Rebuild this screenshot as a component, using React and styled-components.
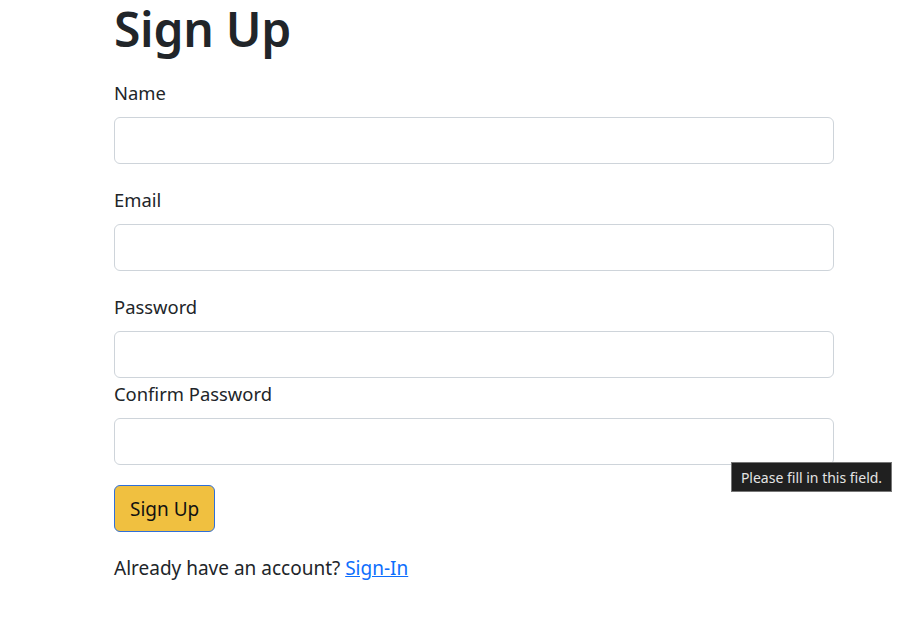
import React from 'react';
import styled, { createGlobalStyle } from 'styled-components';

const Global = createGlobalStyle`
  body {
    margin: 0;
    background: #fff;
    font-family: "Noto Sans", "Open Sans", sans-serif;
    color: #212529;
  }
`

const Page = styled.div`
  position: relative;
  width: 924px;
  height: 627px;
  overflow: hidden;
`
const Form = styled.form`
  width: 720px;
  margin-left: 114px;
  display: flex;
  flex-direction: column;
`
const Title = styled.h1`
  margin: 0;
  font-size: 48px;
  font-weight: 600;
  line-height: 58px;
  letter-spacing: -0.3px;
  color: #212529;
`
const Field = styled.div`
  display: flex;
  flex-direction: column;
  margin-top: ${p => p.gap}px;
`
const Label = styled.label`
  font-size: 18.4px;
  line-height: 27px;
  margin-bottom: 11px;
`
const Input = styled.input`
  box-sizing: border-box;
  height: 47px;
  width: 100%;
  border: 1px solid #ced4da;
  border-radius: 6px;
  background: #fff;
  font-size: 18px;
  padding: 0 14px;
  outline: none;
`
const Button = styled.button`
  align-self: flex-start;
  margin-top: 20px;
  height: 47px;
  padding: 0 15px;
  background: #f0c040;
  border: 1px solid #2f6fd9;
  border-radius: 6px;
  font-family: inherit;
  font-size: 19px;
  color: #111;
`
const Note = styled.p`
  margin: 22px 0 0;
  font-size: 19px;
  line-height: 28px;
`
const SignInLink = styled.a`
  color: #0d6efd;
  text-decoration: underline;
`
const Tooltip = styled.div`
  position: absolute;
  left: 731px;
  top: 462px;
  width: 161px;
  height: 30px;
  box-sizing: border-box;
  background: #202020;
  border: 1px solid #767676;
  color: #e4e4e4;
  font-size: 14px;
  display: flex;
  align-items: center;
  justify-content: center;
`

export default function App() {
  return (
    <Page>
      <Global />
      <Form onSubmit={e => e.preventDefault()}>
        <Title>Sign Up</Title>
        <Field gap={21}>
          <Label>Name</Label>
          <Input type="text" />
        </Field>
        <Field gap={22}>
          <Label>Email</Label>
          <Input type="email" />
        </Field>
        <Field gap={22}>
          <Label>Password</Label>
          <Input type="password" />
        </Field>
        <Field gap={2}>
          <Label>Confirm Password</Label>
          <Input type="password" />
        </Field>
        <Button type="submit">Sign Up</Button>
        <Note>
          Already have an account? <SignInLink href="#">Sign-In</SignInLink>
        </Note>
      </Form>
      <Tooltip>Please fill in this field.</Tooltip>
    </Page>
  );
}
